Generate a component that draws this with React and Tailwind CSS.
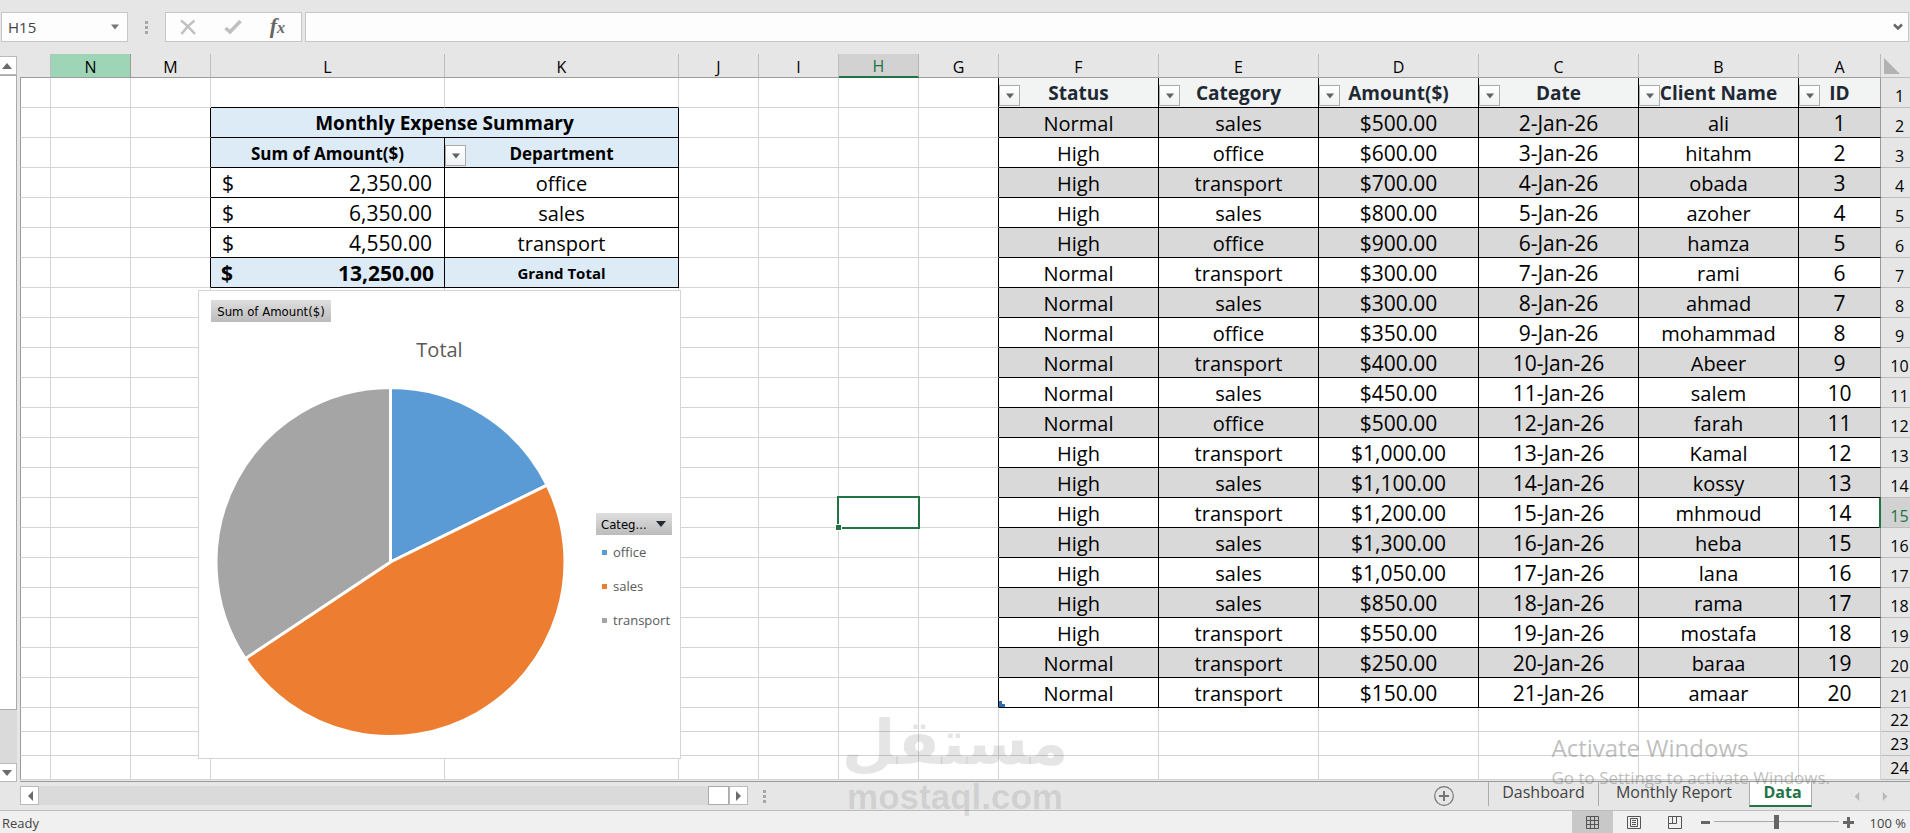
import { useState } from 'react';

const COLUMNS = [
  { id: 'O', width: 'w-auto' },
  { id: 'N', width: 'w-[80px]' },
  { id: 'M', width: 'w-[80px]' },
  { id: 'L', width: 'w-[234px]' },
  { id: 'K', width: 'w-[234px]' },
  { id: 'J', width: 'w-[80px]' },
  { id: 'I', width: 'w-[80px]' },
  { id: 'H', width: 'w-[80px]' },
  { id: 'G', width: 'w-[80px]' },
  { id: 'F', width: 'w-[160px]' },
  { id: 'E', width: 'w-[160px]' },
  { id: 'D', width: 'w-[160px]' },
  { id: 'C', width: 'w-[160px]' },
  { id: 'B', width: 'w-[160px]' },
  { id: 'A', width: 'w-[82px]' },
];

const HEADINGS = ['Status', 'Category', 'Amount($)', 'Date', 'Client Name', 'ID'];

const RECORDS = [
  ['Normal', 'sales', '$500.00', '2-Jan-26', 'ali'],
  ['High', 'office', '$600.00', '3-Jan-26', 'hitahm'],
  ['High', 'transport', '$700.00', '4-Jan-26', 'obada'],
  ['High', 'sales', '$800.00', '5-Jan-26', 'azoher'],
  ['High', 'office', '$900.00', '6-Jan-26', 'hamza'],
  ['Normal', 'transport', '$300.00', '7-Jan-26', 'rami'],
  ['Normal', 'sales', '$300.00', '8-Jan-26', 'ahmad'],
  ['Normal', 'office', '$350.00', '9-Jan-26', 'mohammad'],
  ['Normal', 'transport', '$400.00', '10-Jan-26', 'Abeer'],
  ['Normal', 'sales', '$450.00', '11-Jan-26', 'salem'],
  ['Normal', 'office', '$500.00', '12-Jan-26', 'farah'],
  ['High', 'transport', '$1,000.00', '13-Jan-26', 'Kamal'],
  ['High', 'sales', '$1,100.00', '14-Jan-26', 'kossy'],
  ['High', 'transport', '$1,200.00', '15-Jan-26', 'mhmoud'],
  ['High', 'sales', '$1,300.00', '16-Jan-26', 'heba'],
  ['High', 'sales', '$1,050.00', '17-Jan-26', 'lana'],
  ['High', 'sales', '$850.00', '18-Jan-26', 'rama'],
  ['High', 'transport', '$550.00', '19-Jan-26', 'mostafa'],
  ['Normal', 'transport', '$250.00', '20-Jan-26', 'baraa'],
  ['Normal', 'transport', '$150.00', '21-Jan-26', 'amaar'],
];

const SUMMARY = {
  4: ['2,350.00', 'office'],
  5: ['6,350.00', 'sales'],
  6: ['4,550.00', 'transport'],
};

const SLICES = [
  { name: 'office', value: 2350, color: '#5b9bd5' },
  { name: 'sales', value: 6350, color: '#ed7d31' },
  { name: 'transport', value: 4550, color: '#a5a5a5' },
];

const GRID = 'border-r border-b border-r-[#d4d4d4] border-b-[#d4d4d4]';
const BLACK = 'border-r border-b border-r-black border-b-black';

function Triangle({ dir = 'down', className = '' }) {
  const points = {
    down: '0,2 10,2 5,8',
    up: '0,8 10,8 5,2',
    left: '8,0 8,10 3,5',
    right: '2,0 2,10 7,5',
  };
  return (
    <svg viewBox="0 0 10 10" className={className} fill="currentColor" aria-hidden="true">
      <polygon points={points[dir]} />
    </svg>
  );
}

function Dots() {
  return (
    <span className="flex flex-col gap-[2px]">
      <i className="block size-[3px] bg-[#a6a6a6]" />
      <i className="block size-[3px] bg-[#a6a6a6]" />
      <i className="block size-[3px] bg-[#a6a6a6]" />
    </span>
  );
}

function FilterButton({ label }) {
  return (
    <button
      type="button"
      aria-label={`Filter ${label}`}
      className="absolute bottom-px left-0 flex size-[21px] items-center justify-center border border-[#ababab] bg-linear-to-b from-white to-[#f0f1f4] text-[#5f6266]"
    >
      <Triangle className="size-2" />
    </button>
  );
}

function FormulaBar() {
  const [cell, setCell] = useState('H15');
  const [formula, setFormula] = useState('');
  return (
    <div className="flex h-[54px] items-start pt-3 pl-px pr-px">
      <div className="flex h-[30px] w-[127px] items-center border border-[#c6c6c6] bg-[#fdfdfd] pl-1.5 pr-2">
        <input
          aria-label="Name box"
          value={cell}
          onChange={(e) => setCell(e.target.value)}
          className="w-full min-w-0 bg-transparent text-[15px] text-[#444] outline-none"
        />
        <button type="button" aria-label="Open name list" className="text-[#777]">
          <Triangle className="size-2" />
        </button>
      </div>
      <div className="flex h-[30px] w-[37px] items-center justify-center">
        <Dots />
      </div>
      <div className="flex h-[30px] w-[137px] items-center justify-between border border-[#c6c6c6] bg-[#fdfdfd] pr-4 pl-3.5">
        <button type="button" aria-label="Cancel" className="text-[#c0c0c0]">
          <svg viewBox="0 0 16 16" className="size-4" fill="none" stroke="currentColor" strokeWidth="2.400">
            <path d="M1 1.500 Q7 6 15 15 M14.500 1.500 Q7 7 1.500 15" />
          </svg>
        </button>
        <button type="button" aria-label="Enter" className="text-[#c0c0c0]">
          <svg viewBox="0 0 18 16" className="h-4 w-[18px]" fill="none" stroke="currentColor" strokeWidth="3.500">
            <path d="M1.500 9 L6 13 L16.500 2" />
          </svg>
        </button>
        <button
          type="button"
          aria-label="Insert function"
          className="font-['Liberation_Serif',serif] text-[22px] leading-none font-bold text-[#666] italic"
        >
          f<span className="text-base">x</span>
        </button>
      </div>
      <div className="ml-[3px] flex h-[30px] flex-1 items-center border border-[#c6c6c6] bg-[#fdfdfd] pr-[5px]">
        <input
          aria-label="Formula"
          value={formula}
          onChange={(e) => setFormula(e.target.value)}
          className="w-full min-w-0 bg-transparent px-2 text-[15px] outline-none"
        />
        <button type="button" aria-label="Expand formula bar" className="text-[#666]">
          <svg viewBox="0 0 10 8" className="h-2 w-2.5" fill="none" stroke="currentColor" strokeWidth="2.500">
            <path d="M1 1.500 L5 5.500 L9 1.500" />
          </svg>
        </button>
      </div>
    </div>
  );
}

function VerticalScroll() {
  return (
    <div className="mr-[3px] flex w-[17px] shrink-0 flex-col bg-[#dadada]">
      <div className="h-0.5 bg-[#e6e6e6]" />
      <button
        type="button"
        aria-label="Scroll up"
        className="flex h-[19px] items-center justify-center border-y border-r border-[#bababa] bg-white pr-0.5 text-[#6b6b6b]"
      >
        <Triangle dir="up" className="size-2.5" />
      </button>
      <div className="h-[635px] border-y border-r border-[#ababab] bg-white" />
      <div className="flex-1" />
      <button
        type="button"
        aria-label="Scroll down"
        className="flex h-[19px] items-center justify-center border-y border-r border-[#bababa] bg-white pr-0.5 text-[#6b6b6b]"
      >
        <Triangle className="size-2.5" />
      </button>
    </div>
  );
}

function Pie() {
  const total = SLICES.reduce((sum, s) => sum + s.value, 0);
  const point = (a) => `${174.5 + 174.5 * Math.sin(a)} ${175 - 174.5 * Math.cos(a)}`;
  let angle = 0;
  return (
    <svg viewBox="0 0 350 350" className="size-[350px]" role="img" aria-label="Total by category">
      {SLICES.map((slice) => {
        const start = angle;
        angle += (slice.value / total) * Math.PI * 2;
        const large = angle - start > Math.PI ? 1 : 0;
        return (
          <path
            key={slice.name}
            d={`M174.5 175 L${point(start)} A174.5 174.5 0 ${large} 1 ${point(angle)} Z`}
            fill={slice.color}
            stroke="#fff"
            strokeWidth="3"
            strokeLinejoin="round"
          />
        );
      })}
    </svg>
  );
}

function PivotChart() {
  return (
    <div className="absolute top-0.5 -left-[13px] z-10 flex h-[469px] w-[483px] flex-col border border-[#d4d4d4] bg-white text-left font-normal">
      <button
        type="button"
        className="mt-[9px] ml-3 h-[22px] w-[120px] bg-linear-to-b from-[#dedede] to-[#bcbcbc] font-['DejaVu_Sans_Condensed','DejaVu_Sans',sans-serif] text-[13px] leading-[23px] text-black"
      >
        Sum of Amount($)
      </button>
      <h2 className="mt-3 text-center text-xl leading-8 text-[#595959]">Total</h2>
      <div className="mt-[21px] flex">
        <div className="ml-[17px] shrink-0">
          <Pie />
        </div>
        <div className="mt-[126px] ml-[30px]">
          <button
            type="button"
            className="flex h-[22px] w-[76px] items-center justify-between bg-linear-to-b from-[#dedede] to-[#bcbcbc] pr-1.5 pl-[5px] font-['DejaVu_Sans_Condensed','DejaVu_Sans',sans-serif] text-[13px] text-black"
          >
            Categ...
            <Triangle className="size-2.5 text-[#222b35]" />
          </button>
          <ul className="text-[13px] text-[#595959]">
            {SLICES.map((slice) => (
              <li key={slice.name} className="flex h-[34px] items-center gap-1.5 pl-1.5">
                <i className="block size-[5px]" style={{ background: slice.color }} />
                {slice.name}
              </li>
            ))}
          </ul>
        </div>
      </div>
    </div>
  );
}

// Cells of the pivot summary, columns L and K
function SummaryCells({ row }) {
  if (row === 1) {
    return (
      <>
        <td className="border-r border-b border-r-[#d4d4d4] border-b-black" />
        <td className="border-r border-b border-r-[#d4d4d4] border-b-black" />
      </>
    );
  }
  if (row === 2) {
    return (
      <td colSpan={2} className={`${BLACK} bg-[#ddebf7] text-center text-[19px] font-bold`}>
        Monthly Expense Summary
      </td>
    );
  }
  if (row === 3) {
    return (
      <>
        <td className={`${BLACK} bg-[#ddebf7] text-center text-[17px] font-bold`}>Sum of Amount($)</td>
        <td className={`${BLACK} relative bg-[#ddebf7] text-center text-[17px] font-bold`}>
          <FilterButton label="Department" />
          Department
        </td>
      </>
    );
  }
  if (SUMMARY[row]) {
    return (
      <>
        <td className={`${BLACK} pr-3 pl-[11px] text-[21px]`}>
          <div className="flex justify-between">
            <span>$</span>
            <span>{SUMMARY[row][0]}</span>
          </div>
        </td>
        <td className={`${BLACK} text-center`}>{SUMMARY[row][1]}</td>
      </>
    );
  }
  if (row === 7) {
    return (
      <>
        <td className={`${BLACK} bg-[#ddebf7] pr-2.5 pl-2.5 text-[21px] font-bold`}>
          <div className="flex justify-between">
            <span>$</span>
            <span>13,250.00</span>
          </div>
        </td>
        <td className={`${BLACK} bg-[#ddebf7] text-center text-[15px] font-bold`}>Grand Total</td>
      </>
    );
  }
  return (
    <>
      <td className={`${GRID} ${row === 8 ? 'relative' : ''}`}>{row === 8 && <PivotChart />}</td>
      <td className={GRID} />
    </>
  );
}

// Cells of the data table, columns F to A
function DataCells({ row }) {
  if (row === 1) {
    return HEADINGS.map((title) => (
      <th
        key={title}
        className={`relative border-r border-b border-b-black bg-[#f2f3f3] pt-0.5 text-[19px] font-bold text-[#1f2933] ${
          title === 'ID' ? 'border-r-[#9b9b9b]' : 'border-r-black'
        }`}
      >
        <FilterButton label={title} />
        <span className="relative">{title}</span>
      </th>
    ));
  }
  if (row > 21) {
    return HEADINGS.map((title) => <td key={title} className={GRID} />);
  }
  const record = [...RECORDS[row - 2], row - 1];
  return record.map((value, i) => (
    <td
      key={i}
      className={`relative border-r border-b border-b-black text-center ${
        i === 5 ? 'border-r-[#9b9b9b]' : 'border-r-black'
      } ${i === 2 || i === 3 || i === 5 ? 'text-[21px]' : 'text-xl leading-[27px]'} ${
        row % 2 === 0 ? 'bg-[#d9d9d9]' : 'bg-white'
      }`}
    >
      {value}
      {row === 21 && i === 0 && (
        <svg viewBox="0 0 6 6" className="absolute bottom-0 left-0 size-1.5" fill="#2f6eb5">
          <path d="M0 0h3v3h3v3H0z" />
        </svg>
      )}
    </td>
  ));
}

function Sheet() {
  const rows = Array.from({ length: 24 }, (_, i) => i + 1);
  return (
    <table className="w-full table-fixed border-separate border-spacing-0 bg-white text-xl leading-[27px] text-black [&_td]:pt-0.5">
      <colgroup>
        {COLUMNS.map((c) => (
          <col key={c.id} className={c.width} />
        ))}
        <col className="w-[29px]" />
      </colgroup>
      <thead>
        <tr className="h-6 text-base leading-5">
          {COLUMNS.map((c) => (
            <th
              key={c.id}
              className={`border-r p-0 pt-0.5 font-normal ${
                c.id === 'H'
                  ? 'border-b-2 border-r-[#b5b5b5] border-b-[#217346] bg-[#d2d2d2] text-[#217346]'
                  : c.id === 'N'
                    ? 'border-b border-r-[#9b9b9b] border-b-[#9b9b9b] bg-[#9fd5b7]'
                    : 'border-b border-r-[#bdbdbd] border-b-[#9b9b9b] bg-[#e6e6e6]'
              }`}
            >
              {c.id === 'O' ? '' : c.id}
            </th>
          ))}
          <th className="border-b border-b-[#bdbdbd] bg-[#e6e6e6] p-0 pl-[3px]">
            <svg viewBox="0 0 16 16" className="size-4" fill="#b2b2b2" aria-label="Select all">
              <path d="M0 0 L16 16 H0z" />
            </svg>
          </th>
        </tr>
      </thead>
      <tbody>
        {rows.map((row) => (
          <tr key={row} className={row > 21 ? 'h-6' : 'h-[30px]'}>
            <td className={`${GRID} border-l border-l-[#9b9b9b]`} />
            <td className={GRID} />
            <td
              className={`border-r border-b border-b-[#d4d4d4] ${
                row > 1 && row < 8 ? 'border-r-black' : 'border-r-[#d4d4d4]'
              }`}
            />
            <SummaryCells row={row} />
            <td className={GRID} />
            <td className={GRID} />
            <td className={`${GRID} ${row === 15 ? 'relative' : ''}`}>
              {row === 15 && (
                <>
                  <div className="absolute -inset-0.5 border-2 border-[#217346]" />
                  <div className="absolute -bottom-1 -left-1 size-[7px] border border-white bg-[#217346]" />
                </>
              )}
            </td>
            <td
              className={`border-r border-b border-b-[#d4d4d4] ${row < 22 ? 'border-r-black' : 'border-r-[#d4d4d4]'}`}
            />
            <DataCells row={row} />
            <th
              scope="row"
              className={`border-b border-b-[#bdbdbd] p-0 pl-2 align-bottom text-base leading-[22px] font-normal ${
                row === 15
                  ? 'relative bg-[#d2d2d2] text-[#217346] shadow-[-2px_0_0_#217346]'
                  : 'bg-[#e6e6e6]'
              }`}
            >
              {row}
            </th>
          </tr>
        ))}
      </tbody>
    </table>
  );
}

function SheetTabs() {
  return (
    <div className="relative flex h-[29px] border-b border-[#bdbdbd] bg-[#e6e6e6] pl-5">
      <div className="mt-1 flex h-[19px] w-[728px] bg-[#dadada] text-[#6b6b6b]">
        <button
          type="button"
          aria-label="Scroll left"
          className="flex w-[19px] items-center justify-center border border-[#bababa] bg-white"
        >
          <Triangle dir="left" className="size-2.5" />
        </button>
        <div className="flex-1" />
        <div className="w-[21px] border border-[#ababab] bg-white" />
        <button
          type="button"
          aria-label="Scroll right"
          className="flex w-[19px] items-center justify-center border border-[#bababa] bg-white"
        >
          <Triangle dir="right" className="size-2.5" />
        </button>
      </div>
      <div className="ml-[15px] flex items-center">
        <Dots />
      </div>
      <div className="flex-1" />
      <button type="button" aria-label="New sheet" className="mr-[34px] text-[#757575]">
        <svg viewBox="0 0 20 20" className="size-5" fill="none" stroke="currentColor">
          <circle cx="10" cy="10" r="9.300" strokeWidth="1.200" />
          <path d="M10 5v10M5 10h10" strokeWidth="2" />
        </svg>
      </button>
      <nav className="flex text-base leading-[21px] text-[#444]">
        <a href="#dashboard" className="mb-1 w-[110px] border-l border-[#ababab] text-center">
          Dashboard
        </a>
        <a href="#monthly-report" className="mb-1 w-[151px] border-l border-[#ababab] text-center">
          Monthly Report
        </a>
        <a
          href="#data"
          aria-current="page"
          className="mb-[3px] w-[63px] border-x border-b-2 border-x-[#ababab] border-b-[#217346] bg-white pl-1 text-center font-bold text-[#217346]"
        >
          Data
        </a>
      </nav>
      <div className="flex w-[98px] items-center justify-end gap-5 pr-5 text-[#b9b9b9]">
        <button type="button" aria-label="Previous sheet">
          <Triangle dir="left" className="size-[9px]" />
        </button>
        <button type="button" aria-label="Next sheet">
          <Triangle dir="right" className="size-[9px]" />
        </button>
      </div>
    </div>
  );
}

function StatusBar() {
  const [zoom, setZoom] = useState(100);
  return (
    <footer className="flex h-[22px] items-center bg-[#f0f0f0] text-[13px] leading-5 text-[#444]">
      <span className="pt-0.5 pl-0.5">Ready</span>
      <div className="flex-1" />
      <button type="button" aria-label="Normal view" className="flex h-full w-[41px] items-center justify-center bg-[#c8c8c8]">
        <svg viewBox="0 0 13 13" className="size-[13px]" fill="none" stroke="#555">
          <path d="M.5.5h12v12H.5zM4.500.5v12M8.500.5v12M.5 4.500h12M.5 8.500h12" />
        </svg>
      </button>
      <button type="button" aria-label="Page layout" className="flex w-[41px] items-center justify-center">
        <svg viewBox="0 0 14 13" className="h-[13px] w-3.5" fill="none" stroke="#555">
          <path d="M.5.5h13v12H.5zM3.500 2.500h7v8h-7zM5 4.500h4M5 6.500h4M5 8.500h4" />
        </svg>
      </button>
      <button type="button" aria-label="Page break preview" className="flex w-[41px] items-center justify-center">
        <svg viewBox="0 0 14 13" className="h-[13px] w-3.5" fill="none" stroke="#555">
          <path d="M.5.5h13v12H.5zM8.500.5v7M4.500.5v7M.5 7.500h8" />
        </svg>
      </button>
      <button type="button" aria-label="Zoom out" onClick={() => setZoom(zoom - 10)} className="ml-1.5 h-[3px] w-[9px] bg-[#666]" />
      <input
        type="range"
        aria-label="Zoom"
        min="0"
        max="200"
        value={zoom}
        onChange={(e) => setZoom(Number(e.target.value))}
        className="mx-1 h-3.5 w-[125px] appearance-none bg-linear-to-b from-transparent from-[46%] via-[#a6a6a6] via-[46%] to-transparent to-[54%] [&::-webkit-slider-thumb]:h-3.5 [&::-webkit-slider-thumb]:w-[5px] [&::-webkit-slider-thumb]:appearance-none [&::-webkit-slider-thumb]:bg-[#666]"
      />
      <button type="button" aria-label="Zoom in" onClick={() => setZoom(zoom + 10)}>
        <svg viewBox="0 0 11 11" className="size-[11px]" stroke="#666" strokeWidth="3">
          <path d="M5.500 0v11M0 5.500h11" />
        </svg>
      </button>
      <span className="w-[56px] pt-0.5 pr-1 text-right whitespace-nowrap">{zoom} %</span>
    </footer>
  );
}

export default function App() {
  return (
    <div className="relative flex min-h-screen flex-col overflow-hidden bg-[#e6e6e6] font-['Open_Sans','Noto_Sans',sans-serif]">
      <FormulaBar />
      <main className="flex flex-1">
        <VerticalScroll />
        <div className="min-w-0 flex-1 border-b border-[#9b9b9b] pb-px">
          <Sheet />
        </div>
      </main>
      <SheetTabs />
      <StatusBar />

      {/* Site watermark */}
      <div className="pointer-events-none absolute bottom-[18px] left-1/2 z-20 flex -translate-x-1/2 flex-col items-center font-bold text-black/10">
        <span lang="ar" dir="rtl" className="font-['DejaVu_Sans',sans-serif] text-[62px] leading-[72px]">
          مستقل
        </span>
        <span className="font-['Liberation_Sans',sans-serif] text-[35px] leading-9">mostaql.com</span>
      </div>

      {/* Activation notice */}
      <div className="pointer-events-none absolute right-[80px] bottom-[41px] z-20 text-[#7f7f7f]/50">
        <p className="text-2xl leading-8">Activate Windows</p>
        <p className="text-[17px] leading-7">Go to Settings to activate Windows.</p>
      </div>
    </div>
  );
}
